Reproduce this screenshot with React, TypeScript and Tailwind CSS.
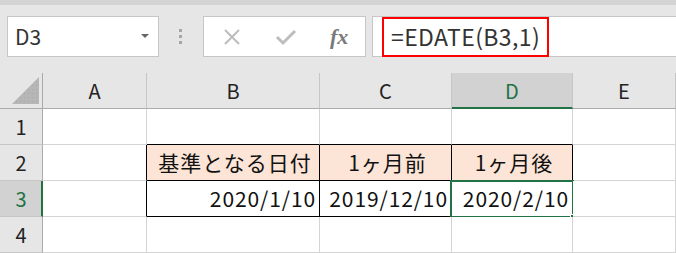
import React from "react";

const FONT = "font-['Noto_Sans_CJK_JP','Noto_Sans',sans-serif]";

const COLS = [
  { key: "A", w: "w-[104px]" },
  { key: "B", w: "w-[173px]" },
  { key: "C", w: "w-[132px]" },
  { key: "D", w: "w-[121px]" },
  { key: "E", w: "w-[103px]" },
];

type CellSpec = {
  text?: string;
  align?: "left" | "center" | "right";
  fill?: boolean;
  blackRight?: boolean;
  blackBottom?: boolean;
  selected?: boolean;
};

// rows 1..4, cols A..E
const ROWS: CellSpec[][] = [
  [{}, { blackBottom: true }, { blackBottom: true }, { blackBottom: true }, {}],
  [
    { blackRight: true },
    { text: "基準となる日付", align: "center", fill: true, blackRight: true, blackBottom: true },
    { text: "1ヶ月前", align: "center", fill: true, blackRight: true, blackBottom: true },
    { text: "1ヶ月後", align: "center", fill: true, blackRight: true, blackBottom: true },
    {},
  ],
  [
    { blackRight: true },
    { text: "2020/1/10", align: "right", blackRight: true, blackBottom: true },
    { text: "2019/12/10", align: "right", blackRight: true, blackBottom: true },
    { text: "2020/2/10", align: "right", blackRight: true, blackBottom: true, selected: true },
    {},
  ],
  [{}, {}, {}, {}, {}],
];

function Cell({ spec, width }: { spec: CellSpec; width: string }) {
  const justify =
    spec.align === "right"
      ? "justify-end pr-[3px]"
      : spec.align === "center"
        ? "justify-center"
        : "justify-start";
  return (
    <div
      className={`relative flex h-[36px] shrink-0 items-center border-b border-r pl-[4px] pt-[1px] text-[21px] text-[#111] ${width} ${justify} ${
        spec.fill ? "bg-[#fce4d6] tracking-[1px]" : "bg-white tracking-[0.9px]"
      } ${spec.blackRight ? "border-r-black" : "border-r-[#d4d4d4]"} ${
        spec.blackBottom ? "border-b-black" : "border-b-[#d4d4d4]"
      }`}
    >
      {spec.text && <span className="whitespace-nowrap">{spec.text}</span>}
      {spec.selected && (
        <>
          <div className="pointer-events-none absolute -left-[2px] -top-[1px] bottom-[-2px] right-[-2px] border-2 border-[#217346]" />
          <div className="absolute -bottom-[5px] -right-[5px] h-[7px] w-[7px] border border-white bg-[#217346]" />
        </>
      )}
    </div>
  );
}

export default function App() {
  return (
    <div className={`h-[253px] w-[676px] overflow-hidden bg-[#e6e6e6] ${FONT}`}>
      <div className="h-[5px] bg-[#d4d4d4]" />

      {/* formula bar */}
      <div className="flex h-[68px] items-start pl-[7px] pt-[11px]">
        <div className="flex h-[41px] w-[152px] items-center justify-between border border-[#c6c6c6] bg-white pl-[7px] pr-[9px]">
          <span className="text-[21px] text-[#333]">D3</span>
          <svg width="8" height="5" viewBox="0 0 8 5">
            <path d="M0 0h8L4 4z" fill="#666" />
          </svg>
        </div>
        <div className="ml-[20px] mt-[13px] flex flex-col gap-[3px]">
          <div className="h-[3px] w-[3px] bg-[#a6a6a6]" />
          <div className="h-[3px] w-[3px] bg-[#a6a6a6]" />
          <div className="h-[3px] w-[3px] bg-[#a6a6a6]" />
        </div>
        <div className="ml-[21px] flex h-[41px] w-[163px] items-center border border-[#c6c6c6] bg-white">
          <svg className="ml-[19px]" width="18" height="18" viewBox="0 0 18 18">
            <path d="M2 2l14 14M16 2L2 16" stroke="#bdbdbd" strokeWidth="2" />
          </svg>
          <svg className="ml-[34px]" width="22" height="18" viewBox="0 0 22 18">
            <path d="M2 9l6 6L20 3" stroke="#bdbdbd" strokeWidth="3" fill="none" />
          </svg>
          <span className="ml-[33px] font-['Liberation_Serif',serif] text-[22px] font-bold italic text-[#7a7a7a]">
            fx
          </span>
        </div>
        <div className="ml-[6px] flex h-[41px] flex-1 items-center border border-r-0 border-[#c6c6c6] bg-white pl-[9px]">
          <span className="flex h-[40px] items-center border-2 border-[#ff0000] pl-[7px] pr-[7px] text-[23px] tracking-[0.4px] text-[#333]">
            =EDATE(B3,1)
          </span>
        </div>
      </div>

      {/* column headers */}
      <div className="flex h-[36px]">
        <div className="relative h-[36px] w-[43px] shrink-0 border-b border-r border-b-[#ababab] border-r-[#ababab]">
          <svg className="absolute left-0 top-0" width="42" height="35" viewBox="0 0 42 35">
            <defs>
              <pattern id="dots" width="4" height="4" patternUnits="userSpaceOnUse">
                <rect width="4" height="4" fill="#b6b6b6" />
                <rect width="1" height="1" fill="#a8a8a8" />
              </pattern>
            </defs>
            <path d="M12 31H39V4z" fill="url(#dots)" />
          </svg>
        </div>
        {COLS.map((c) =>
          c.key === "D" ? (
            <div
              key={c.key}
              className={`flex h-[36px] shrink-0 items-center justify-center border-r border-b-2 border-r-[#c6c6c6] border-b-[#217346] bg-[#d2d2d2] pt-[2px] text-[20px] text-[#217346] ${c.w}`}
            >
              {c.key}
            </div>
          ) : (
            <div
              key={c.key}
              className={`flex h-[36px] shrink-0 items-center justify-center border-b border-r border-b-[#ababab] border-r-[#c6c6c6] pt-[1px] text-[20px] text-[#222] ${c.w}`}
            >
              {c.key}
            </div>
          )
        )}
      </div>

      {/* rows */}
      {ROWS.map((row, i) => (
        <div key={i} className="flex h-[36px]">
          {i === 2 ? (
            <div className="flex h-[36px] w-[43px] shrink-0 items-center justify-center border-b border-r-2 border-b-[#c6c6c6] border-r-[#217346] bg-[#d2d2d2] pl-[1px] text-[20px] text-[#217346]">
              {i + 1}
            </div>
          ) : (
            <div className="flex h-[36px] w-[43px] shrink-0 items-center justify-center border-b border-r border-b-[#c6c6c6] border-r-[#ababab] text-[20px] text-[#222]">
              {i + 1}
            </div>
          )}
          {row.map((spec, j) => (
            <Cell key={j} spec={spec} width={COLS[j].w} />
          ))}
        </div>
      ))}
    </div>
  );
}
